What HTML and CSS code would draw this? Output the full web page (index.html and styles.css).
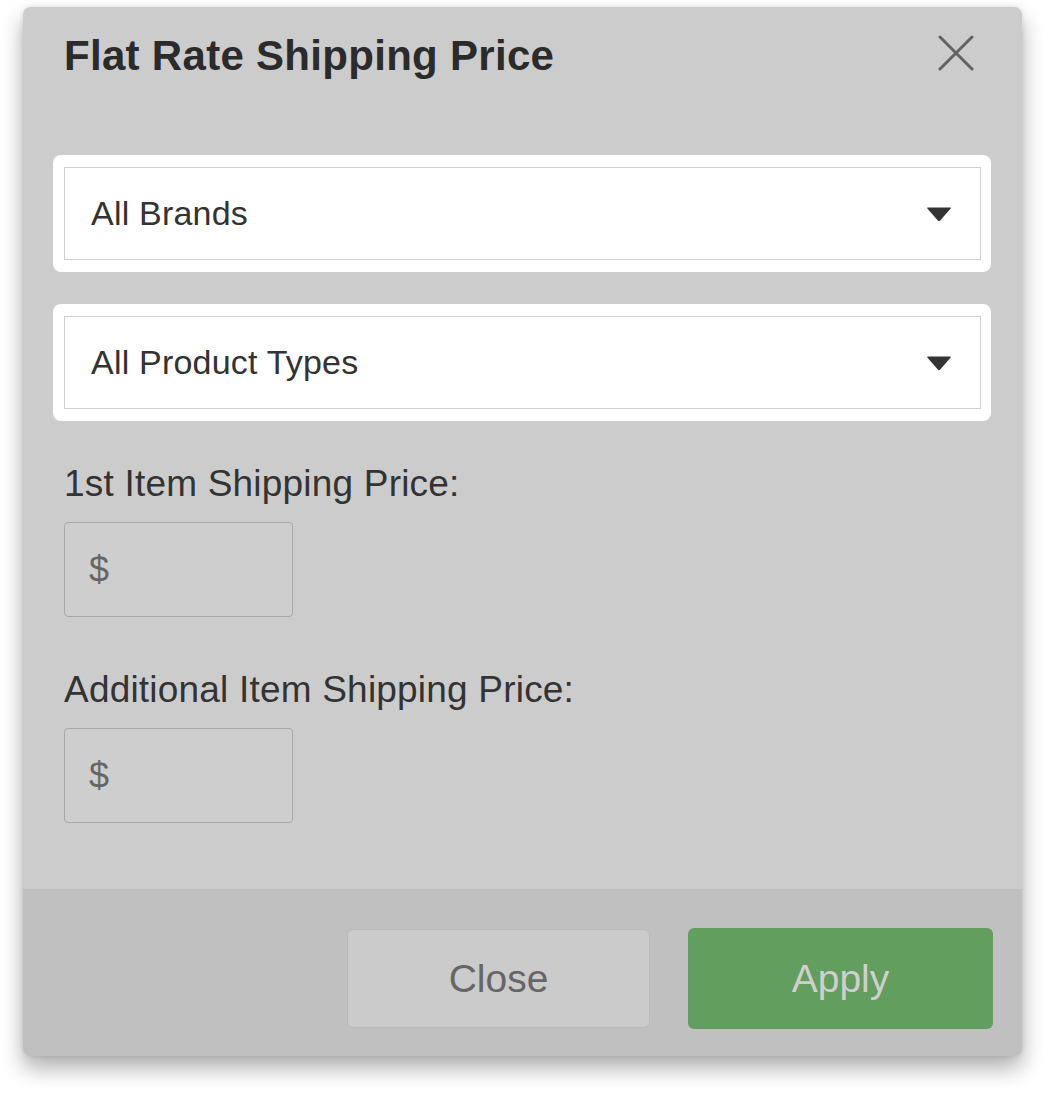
FILE: index.html
```html
<!DOCTYPE html>
<html lang="en">
<head>
<meta charset="utf-8">
<title>Flat Rate Shipping Price</title>
<link rel="stylesheet" href="styles.css">
</head>
<body>
<div class="page">
  <div class="modal">
    <div class="modal-header">
      <h1 class="modal-title">Flat Rate Shipping Price</h1>
      <svg class="close-icon" width="36" height="36" viewBox="0 0 36 36" aria-hidden="true">
        <path d="M2 2 L34 34 M34 2 L2 34" stroke="#636363" stroke-width="3" stroke-linecap="round" fill="none"/>
      </svg>
    </div>
    <div class="modal-body">
      <div class="select-wrap">
        <div class="select">
          <span class="select-text">All Brands</span>
          <svg class="caret" width="26" height="16" viewBox="0 0 26 16" aria-hidden="true">
            <path d="M2 1.5 H24 Q25.5 1.5 24.5 2.8 L14.2 14.5 Q13 15.8 11.8 14.5 L1.5 2.8 Q0.5 1.5 2 1.5 Z" fill="#333"/>
          </svg>
        </div>
      </div>
      <div class="select-wrap">
        <div class="select">
          <span class="select-text">All Product Types</span>
          <svg class="caret" width="26" height="16" viewBox="0 0 26 16" aria-hidden="true">
            <path d="M2 1.5 H24 Q25.5 1.5 24.5 2.8 L14.2 14.5 Q13 15.8 11.8 14.5 L1.5 2.8 Q0.5 1.5 2 1.5 Z" fill="#333"/>
          </svg>
        </div>
      </div>
      <div class="field field-first">
        <label class="field-label">1st Item Shipping Price:</label>
        <div class="price-input"><span class="currency">$</span></div>
      </div>
      <div class="field field-second">
        <label class="field-label">Additional Item Shipping Price:</label>
        <div class="price-input"><span class="currency">$</span></div>
      </div>
    </div>
    <div class="modal-footer">
      <button class="btn btn-close">Close</button>
      <button class="btn btn-apply">Apply</button>
    </div>
  </div>
</div>
</body>
</html>
```

FILE: styles.css
```css
html, body {
  margin: 0;
  padding: 0;
  background: #ffffff;
}

body {
  font-family: "Liberation Sans", Arial, sans-serif;
  color: #333333;
}

.page {
  padding: 7px 23px 39px 23px;
}

.modal {
  background: #cccccc;
  border-radius: 8px;
  overflow: hidden;
  box-shadow: 0 12px 22px rgba(0, 0, 0, 0.32), 0 0 5px rgba(0, 0, 0, 0.1);
}

.modal-header {
  display: flex;
  justify-content: space-between;
  align-items: flex-start;
  padding: 24px 48px 0 41px;
}

.modal-title {
  margin: 0;
  font-size: 42px;
  line-height: 50px;
  font-weight: 700;
  color: #2b2b2b;
  letter-spacing: 0.3px;
}

.close-icon {
  display: block;
  margin-top: 4px;
}

.modal-body {
  display: flex;
  flex-direction: column;
  padding: 74px 31px 66px 30px;
}

.select-wrap {
  background: #ffffff;
  border-radius: 8px;
  padding: 12px 10px 12px 11px;
}

.select-wrap + .select-wrap {
  margin-top: 32px;
}

.select {
  display: flex;
  align-items: center;
  justify-content: space-between;
  height: 91px;
  border: 1px solid #cfcfcf;
  padding: 0 28px 0 26px;
}

.select-text {
  font-size: 34px;
  color: #333333;
  letter-spacing: 0.2px;
}

.caret {
  display: block;
}

.field {
  display: flex;
  flex-direction: column;
  align-items: flex-start;
  margin-left: 11px;
}

.field-first {
  margin-top: 43px;
}

.field-second {
  margin-top: 53px;
}

.field-label {
  font-size: 37px;
  line-height: 40px;
  color: #333333;
  letter-spacing: 0.2px;
  margin-bottom: 18px;
}

.price-input {
  box-sizing: border-box;
  width: 229px;
  height: 95px;
  border: 1.5px solid #a8a8a8;
  border-radius: 4px;
  background: #cecece;
  display: flex;
  align-items: center;
  padding-left: 24px;
}

.currency {
  font-size: 36px;
  color: #666666;
}

.modal-footer {
  background: #c0c0c0;
  display: flex;
  justify-content: flex-end;
  align-items: center;
  gap: 38px;
  padding: 39px 29px 27px 29px;
}

.btn {
  font-family: "Liberation Sans", Arial, sans-serif;
  font-size: 39px;
  border-radius: 6px;
  cursor: pointer;
}

.btn-close {
  width: 303px;
  height: 99px;
  background: #cbcbcb;
  border: 1px solid #bababa;
  color: #666666;
}

.btn-apply {
  width: 305px;
  height: 101px;
  background: #629e5d;
  border: none;
  color: #cfcfcf;
}
```
